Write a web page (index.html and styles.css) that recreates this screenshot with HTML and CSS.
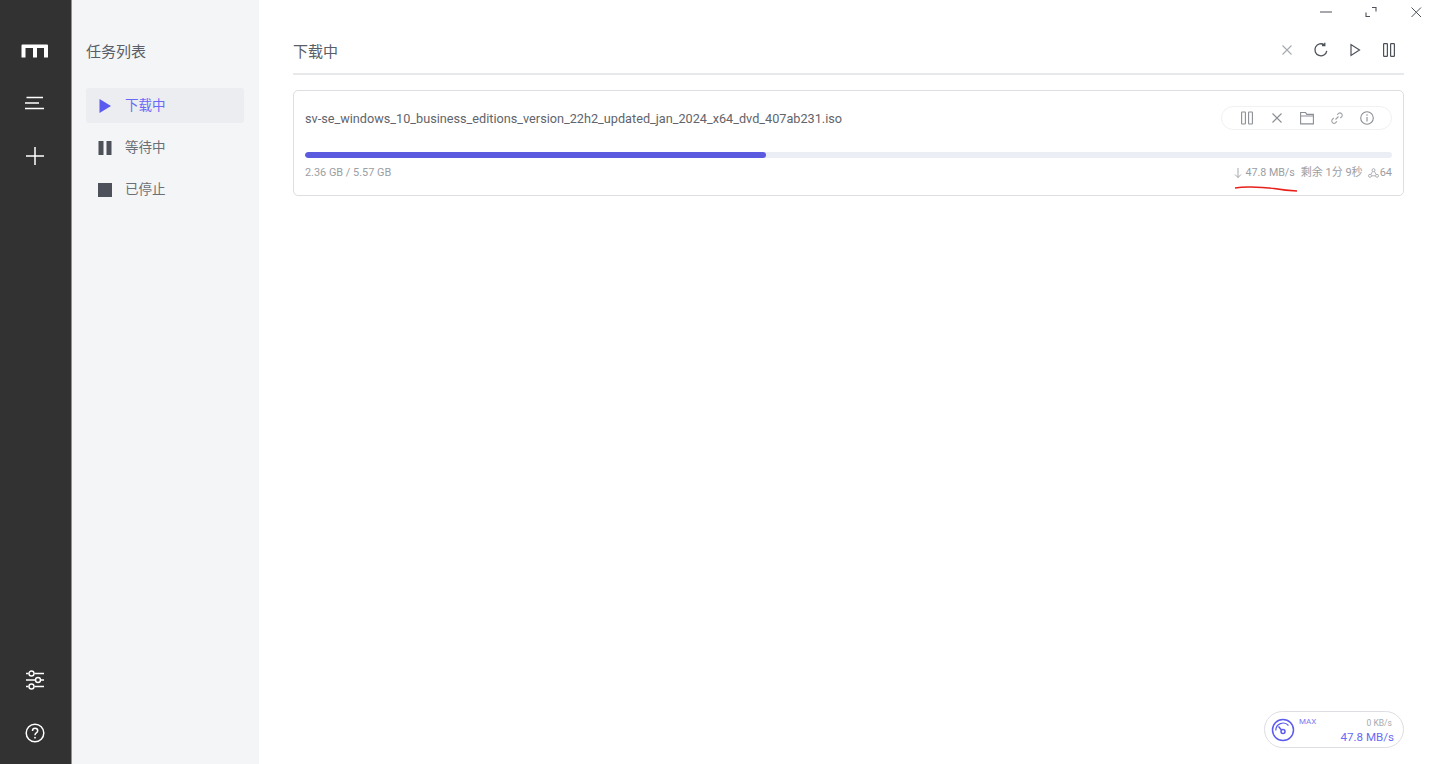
FILE: index.html
```html
<!DOCTYPE html>
<html lang="zh">
<head>
<meta charset="utf-8">
<title>任务列表</title>
<link rel="stylesheet" href="styles.css">
</head>
<body>
<div class="app">
  <aside class="rail">
    <div class="rail-top">
      <svg class="logo" viewBox="0 0 28 14" width="28" height="14"><path d="M.5 13.500V1.500Q.5 .5 1.500 .5H26Q27 .5 27 1.500V13.500H23V4H16V13.500H12V4H4.500V13.500Z" fill="#fff"/></svg>
      <svg class="rail-icon" viewBox="0 0 20 14" width="20" height="14"><path d="M1.500 1.500H18M0 7H14M0 12.500H19" stroke="#fff" stroke-width="1.500" fill="none"/></svg>
      <svg class="rail-icon" viewBox="0 0 20 20" width="20" height="20"><path d="M10 1V19M1 10H19" stroke="#fff" stroke-width="1.500" fill="none"/></svg>
    </div>
    <div class="rail-bottom">
      <svg viewBox="0 0 20 20" width="20" height="20" fill="none" stroke="#fff" stroke-width="1.400"><path d="M1 3.500H3.500M9.500 3.500H19M1 10H10M16 10H19M1 16.500H3.500M9.500 16.500H19"/><circle cx="6.500" cy="3.500" r="2.500"/><circle cx="13" cy="10" r="2.500"/><circle cx="6.500" cy="16.500" r="2.500"/></svg>
      <svg viewBox="0 0 20 20" width="20" height="20" fill="none" stroke="#fff" stroke-width="1.500"><circle cx="10" cy="10" r="8.800"/><path d="M7.500 8Q7.500 5.300 10 5.300Q12.700 5.300 12.700 7.700Q12.700 9 11.300 9.900Q10 10.700 10 12.200"/><circle cx="10" cy="14.700" r=".9" fill="#fff" stroke="none"/></svg>
    </div>
  </aside>
  <nav class="subnav">
    <h2 class="subnav-title">任务列表</h2>
    <ul class="subnav-list">
      <li class="subnav-item active"><svg viewBox="0 0 14 14" width="14" height="14"><path d="M1.500 0V14L13 7Z" fill="#5b5bf0"/></svg><span>下载中</span></li>
      <li class="subnav-item"><svg viewBox="0 0 14 14" width="14" height="14"><path d="M0.500 0H5.500V14H0.500ZM8.500 0H13.500V14H8.500Z" fill="#4d5159"/></svg><span>等待中</span></li>
      <li class="subnav-item"><svg viewBox="0 0 14 14" width="14" height="14"><rect width="14" height="14" fill="#4d5159"/></svg><span>已停止</span></li>
    </ul>
  </nav>
  <main class="main">
    <header class="main-head">
      <h1 class="main-title">下载中</h1>
      <div class="toolbar">
        <svg viewBox="0 0 14 14" width="14" height="14" fill="none" stroke="#a6a9ae" stroke-width="1.100"><path d="M2.500 2.500L11.500 11.500M11.500 2.500L2.500 11.500"/></svg>
        <svg class="icon-wide" viewBox="0 0 16 16" width="16" height="16" fill="none" stroke="#4d5159" stroke-width="1.300"><path d="M13.800 8.800A6 6 0 1 1 11.500 3M11.800 .8V3.500H9"/></svg>
        <svg viewBox="-1 0 14 16" width="14" height="16" fill="none" stroke="#4d5159" stroke-width="1.200"><path d="M2 2.500V13.500L10.500 8Z"/></svg>
        <svg viewBox="0 0 14 14" width="14" height="14" fill="none" stroke="#4d5159" stroke-width="1.200"><rect x="1.600" y=".6" width="3.800" height="12.800" rx=".6"/><rect x="8.600" y=".6" width="3.800" height="12.800" rx=".6"/></svg>
      </div>
    </header>
    <article class="task">
      <div class="task-top">
        <div class="task-name">sv-se_windows_10_business_editions_version_22h2_updated_jan_2024_x64_dvd_407ab231.iso</div>
        <div class="task-actions">
          <svg viewBox="0 0 14 14" width="14" height="14" fill="none" stroke="#8b8e94" stroke-width="1.100"><rect x="1.600" y="1" width="3.800" height="12" rx=".5"/><rect x="8.600" y="1" width="3.800" height="12" rx=".5"/></svg>
          <svg viewBox="0 0 14 14" width="14" height="14" fill="none" stroke="#8b8e94" stroke-width="1.100"><path d="M2.500 2.500L11.500 11.500M11.500 2.500L2.500 11.500"/></svg>
          <svg viewBox="0 0 14 14" width="14" height="14" fill="none" stroke="#8b8e94" stroke-width="1.100"><path d="M.6 12.900V1.500H5.500L6.800 3.400H13.400V12.900ZM.6 5H13.400"/></svg>
          <svg viewBox="0 0 14 14" width="14" height="14" fill="none" stroke="#a0a3a8" stroke-width="1.100"><path d="M5.500 8.500L8.500 5.500M7.200 3.800L8.800 2.200A2.400 2.400 0 0 1 12 5.400L10.400 7M7 10.300L5.300 12A2.400 2.400 0 0 1 2 8.800L3.700 7"/></svg>
          <svg viewBox="0 0 14 14" width="14" height="14" fill="none" stroke="#8b8e94" stroke-width="1.100"><circle cx="7" cy="7" r="6.300"/><path d="M7 6V10.500M7 3.300V4.800"/></svg>
        </div>
      </div>
      <div class="progress"><div class="progress-bar" style="width:42.4%"></div></div>
      <div class="task-meta">
        <span class="task-size">2.36 GB / 5.57 GB</span>
        <div class="task-stats">
          <span class="speed"><svg viewBox="0 0 8 10" width="8" height="10" fill="none" stroke="#9b9ea3" stroke-width=".9"><path d="M4 0V9.500M1 6.500L4 9.500L7 6.500"/></svg>47.8 MB/s<svg class="scribble" viewBox="0 0 64 7" width="64" height="7" fill="none"><path d="M1 2Q8 .8 17 1Q30 1.500 40 2.500Q52 4.500 63 5" stroke="#e8201c" stroke-width="1.400"/></svg></span>
          <span>剩余 1分 9秒</span>
          <span class="peers"><svg viewBox="0 0 11 10" width="11" height="10" fill="none" stroke="#9b9ea3" stroke-width=".8"><circle cx="5.500" cy="2.200" r="1.500"/><circle cx="2" cy="7.800" r="1.500"/><circle cx="9" cy="7.800" r="1.500"/><path d="M4.500 3.500L3 6.300M6.500 3.500L8 6.300M3.800 7.800H7.200"/></svg>64</span>
        </div>
      </div>
    </article>
  </main>
</div>
<div class="window-controls">
  <svg viewBox="0 0 12 12" width="12" height="12" fill="none" stroke="#4d5159" stroke-width="1"><path d="M0 6H12"/></svg>
  <svg viewBox="0 0 12 12" width="12" height="12" fill="none" stroke="#4d5159" stroke-width="1.100"><path d="M7 1.500H11V5.500M1 6.500V10.500H5"/></svg>
  <svg viewBox="0 0 12 12" width="12" height="12" fill="none" stroke="#4d5159" stroke-width="1"><path d="M1.500 1.500L11 11M11 1.500L1.500 11"/></svg>
</div>
<div class="speedo">
  <svg viewBox="0 0 24 24" width="24" height="24" fill="none" stroke="#5b5bf0" stroke-width="1.500"><circle cx="12" cy="12" r="10.500"/><path d="M4.800 12.500A7.300 7.300 0 0 1 17.500 7.500" stroke-width="1.200"/><circle cx="12" cy="13.500" r="2"/><path d="M10.500 12L7.500 8.500"/></svg>
  <span class="speedo-max">MAX</span>
  <div class="speedo-values">
    <span class="speedo-up">0 KB/s</span>
    <span class="speedo-down">47.8 MB/s</span>
  </div>
</div>
</body>
</html>
```
FILE: styles.css
```css
* { box-sizing: border-box; }
html, body { margin: 0; height: 100%; }
body {
  font-family: Roboto, "Noto Sans CJK SC", sans-serif;
  background: #fff;
  color: #4d5159;
  overflow: hidden;
}
.app { display: flex; height: 764px; }
.rail {
  width: 72px;
  flex: none;
  background: #323232;
  border-right: 1px solid #8f9193;
  display: flex;
  flex-direction: column;
  justify-content: space-between;
  align-items: center;
  padding: 44px 0 21px;
}
.rail-top { display: flex; flex-direction: column; align-items: center; gap: 38px; }
.rail-top .rail-icon:last-child { margin-top: -2px; }
.rail-bottom { display: flex; flex-direction: column; align-items: center; gap: 33px; }
.rail-top, .rail-bottom { margin-right: 1px; }
.subnav {
  width: 187px;
  flex: none;
  background: #f4f5f7;
  padding: 0 15px 0 14px;
}
.subnav-title {
  margin: 0;
  padding-top: 41px;
  font-size: 15px;
  line-height: 22px;
  font-weight: 400;
  color: #5a5e66;
}
.subnav-list { list-style: none; margin: 25px 0 0; padding: 0; display: flex; flex-direction: column; gap: 7px; }
.subnav-item {
  height: 35px;
  display: flex;
  align-items: center;
  gap: 13px;
  padding-left: 12px;
  font-size: 13.500px;
  line-height: 33px;
  border-radius: 3px;
  color: #6b6f76;
}
.subnav-item.active { background: #ecedf1; color: #6a6af5; }
.main { flex: 1; padding: 0 28px 0 34px; min-width: 0; }
.main-head {
  height: 75px;
  padding-top: 41px;
  border-bottom: 2px solid #e8e9eb;
  display: flex;
  justify-content: space-between;
}
.main-title { margin: 0; font-size: 15px; line-height: 22px; font-weight: 400; color: #5a5e66; }
.toolbar { display: flex; align-items: center; gap: 20px; height: 18px; padding-right: 8px; }
.icon-wide { margin: 0 -1px; }
.task {
  margin-top: 15px;
  height: 106px;
  border: 1px solid #dcdee2;
  border-radius: 5px;
  padding: 15px 11px 0;
}
.task-top { display: flex; justify-content: space-between; align-items: center; height: 24px; }
.task-name { font-size: 12.700px; line-height: 24px; padding-top: 2px; color: #61646b; white-space: nowrap; }
.task-actions {
  display: flex;
  gap: 16px;
  align-items: center;
  height: 24px;
  padding: 0 17px 0 18px;
  border: 1px solid #f0f1f3;
  border-radius: 12px;
}
.progress { margin-top: 22px; height: 6px; border-radius: 3px; background: #ebeef5; overflow: hidden; }
.progress-bar { height: 100%; border-radius: 3px; background: #5b5bdf; }
.task-meta {
  display: flex;
  justify-content: space-between;
  align-items: center;
  margin-top: 7px;
  font-size: 11px;
  line-height: 16px;
  color: #9b9ea3;
}
.task-size { font-size: 10.900px; }
.task-stats { display: flex; gap: 5px; align-items: center; }
.speed, .peers { position: relative; display: inline-flex; align-items: center; gap: 2px; }
.peers { gap: 1px; }
.speed { font-size: 10.700px; gap: 3px; margin-right: 1px; }
.scribble { position: absolute; left: 0; top: 21px; }
.window-controls {
  position: absolute;
  top: 6px;
  right: 10px;
  display: flex;
  gap: 33px;
}
.speedo {
  position: absolute;
  left: 1264px;
  top: 711px;
  width: 140px;
  height: 37px;
  border: 1px solid #dcdee2;
  border-radius: 19px;
  display: flex;
  align-items: center;
  padding: 0 9px 0 6px;
}
.speedo-max { align-self: flex-start; margin: 4px 0 0 4px; font-size: 8px; line-height: 12px; color: #7b7bf2; }
.speedo-values { margin-left: auto; display: flex; flex-direction: column; align-items: flex-end; padding-top: 2px; }
.speedo-up { font-size: 8.500px; line-height: 12px; color: #a6a9ae; margin-right: 2px; }
.speedo-down { font-size: 11.600px; line-height: 16px; color: #6a6af5; }
```
